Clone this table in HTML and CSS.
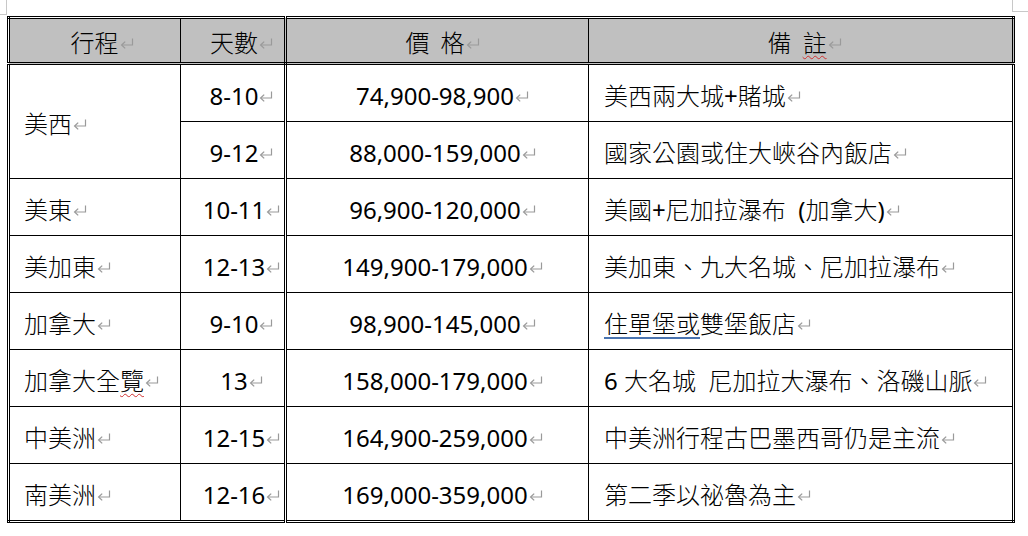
FILE: index.html
```html
<!DOCTYPE html>
<html lang="zh-Hant">
<head>
<meta charset="utf-8">
<title>行程價格表</title>
<link rel="stylesheet" href="styles.css">
</head>
<body>
<svg class="defs" width="0" height="0" aria-hidden="true">
  <symbol id="ret" viewBox="0 0 14 11">
    <path d="M12.5 0.5 V7 H2" fill="none" stroke="#9a9a9a" stroke-width="1.2"/>
    <path d="M5.2 3.6 L1.6 7 L5.2 10.4" fill="none" stroke="#9a9a9a" stroke-width="1.3"/>
  </symbol>
</svg>
<div class="corner corner-l"></div>
<div class="corner corner-r"></div>
<table class="tour">
  <colgroup>
    <col class="c1"><col class="c2"><col class="c3"><col class="c4">
  </colgroup>
  <thead>
    <tr>
      <th class="ctr">行程<svg class="ret"><use href="#ret"/></svg></th>
      <th class="ctr days">天數<svg class="ret"><use href="#ret"/></svg></th>
      <th class="ctr price wide">價 格<svg class="ret"><use href="#ret"/></svg></th>
      <th class="ctr note-h wide">備 <span class="spell">註</span><svg class="ret"><use href="#ret"/></svg></th>
    </tr>
  </thead>
  <tbody>
    <tr>
      <td class="name" rowspan="2">美西<svg class="ret"><use href="#ret"/></svg></td>
      <td class="ctr days num">8-10<svg class="ret"><use href="#ret"/></svg></td>
      <td class="ctr price num">74,900-98,900<svg class="ret"><use href="#ret"/></svg></td>
      <td class="note">美西兩大城<span class="lat">+</span>賭城<svg class="ret"><use href="#ret"/></svg></td>
    </tr>
    <tr>
      <td class="ctr days num">9-12<svg class="ret"><use href="#ret"/></svg></td>
      <td class="ctr price num">88,000-159,000<svg class="ret"><use href="#ret"/></svg></td>
      <td class="note">國家公園或住大峽谷內飯店<svg class="ret"><use href="#ret"/></svg></td>
    </tr>
    <tr>
      <td class="name">美東<svg class="ret"><use href="#ret"/></svg></td>
      <td class="ctr days num">10-11<svg class="ret"><use href="#ret"/></svg></td>
      <td class="ctr price num">96,900-120,000<svg class="ret"><use href="#ret"/></svg></td>
      <td class="note">美國<span class="lat">+</span>尼加拉瀑布&nbsp;&nbsp;<span class="lat">(</span>加拿大<span class="lat">)</span><svg class="ret"><use href="#ret"/></svg></td>
    </tr>
    <tr>
      <td class="name">美加東<svg class="ret"><use href="#ret"/></svg></td>
      <td class="ctr days num">12-13<svg class="ret"><use href="#ret"/></svg></td>
      <td class="ctr price num">149,900-179,000<svg class="ret"><use href="#ret"/></svg></td>
      <td class="note">美加東、九大名城、尼加拉瀑布<svg class="ret"><use href="#ret"/></svg></td>
    </tr>
    <tr>
      <td class="name">加拿大<svg class="ret"><use href="#ret"/></svg></td>
      <td class="ctr days num">9-10<svg class="ret"><use href="#ret"/></svg></td>
      <td class="ctr price num">98,900-145,000<svg class="ret"><use href="#ret"/></svg></td>
      <td class="note"><span class="grammar">住單堡或</span>雙堡飯店<svg class="ret"><use href="#ret"/></svg></td>
    </tr>
    <tr>
      <td class="name">加拿大全<span class="spell">覽</span><svg class="ret"><use href="#ret"/></svg></td>
      <td class="ctr days num">13<svg class="ret"><use href="#ret"/></svg></td>
      <td class="ctr price num">158,000-179,000<svg class="ret"><use href="#ret"/></svg></td>
      <td class="note"><span class="lat">6</span> 大名城&nbsp;&nbsp;尼加拉大瀑布、洛磯山脈<svg class="ret"><use href="#ret"/></svg></td>
    </tr>
    <tr>
      <td class="name">中美洲<svg class="ret"><use href="#ret"/></svg></td>
      <td class="ctr days num">12-15<svg class="ret"><use href="#ret"/></svg></td>
      <td class="ctr price num">164,900-259,000<svg class="ret"><use href="#ret"/></svg></td>
      <td class="note">中美洲行程古巴墨西哥仍是主流<svg class="ret"><use href="#ret"/></svg></td>
    </tr>
    <tr>
      <td class="name">南美洲<svg class="ret"><use href="#ret"/></svg></td>
      <td class="ctr days num">12-16<svg class="ret"><use href="#ret"/></svg></td>
      <td class="ctr price num">169,000-359,000<svg class="ret"><use href="#ret"/></svg></td>
      <td class="note">第二季以祕魯為主<svg class="ret"><use href="#ret"/></svg></td>
    </tr>
  </tbody>
</table>
</body>
</html>
```
FILE: styles.css
```css
html, body {
  margin: 0;
  padding: 0;
  background: #ffffff;
}

body {
  position: relative;
  width: 1028px;
  height: 536px;
  overflow: hidden;
  font-family: "Noto Sans", "Noto Sans CJK TC", sans-serif;
  font-weight: 300;
  color: #000000;
}

.defs {
  position: absolute;
  width: 0;
  height: 0;
}

.corner {
  position: absolute;
  border-color: #c8c8c8;
  border-style: solid;
}

.corner-l {
  left: -1px;
  top: 0;
  width: 7px;
  height: 14px;
  border-width: 0 1px 1px 0;
}

.corner-r {
  left: 1012px;
  top: 0;
  width: 20px;
  height: 11px;
  border-width: 0 0 1px 1px;
}

.tour {
  margin: 16px 0 0 7px;
  border-collapse: collapse;
  table-layout: fixed;
  width: 1008px;
  border: 3px double #000;
  font-size: 24px;
  line-height: 30px;
}

.c1 { width: 172px; }
.c2 { width: 105px; }
.c3 { width: 303px; }
.c4 { width: 425px; }

.tour th,
.tour td {
  border: 1px solid #000;
  padding: 5px 0 0 0;
  white-space: nowrap;
  overflow: visible;
  vertical-align: middle;
}

.tour th {
  background: #c0c0c0;
  font-weight: 300;
  height: 38px;
  border-bottom: 3px double #000;
}

.tour td {
  height: 51px;
}

.tour th.days,
.tour td.days {
  border-right: 3px double #000;
}

.num,
.lat {
  font-weight: 400;
}

.ctr {
  text-align: center;
  padding-left: 14px !important;
}

.days {
  padding-left: 18px !important;
}

.price {
  padding-left: 10px !important;
}

.note-h {
  padding-left: 8px !important;
}

.wide {
  word-spacing: 5px;
}

.name {
  text-align: left;
  padding-left: 14px !important;
}

.note {
  text-align: left;
  padding-left: 15px !important;
}

.ret {
  width: 14px;
  height: 11px;
  margin-left: 1px;
  vertical-align: 3px;
}

.spell {
  text-decoration: underline wavy #d03030;
  text-decoration-thickness: 1px;
  text-underline-offset: 3px;
}

.grammar {
  text-decoration: underline #4a74b0;
  text-decoration-thickness: 1.5px;
  text-underline-offset: 4px;
}
```
